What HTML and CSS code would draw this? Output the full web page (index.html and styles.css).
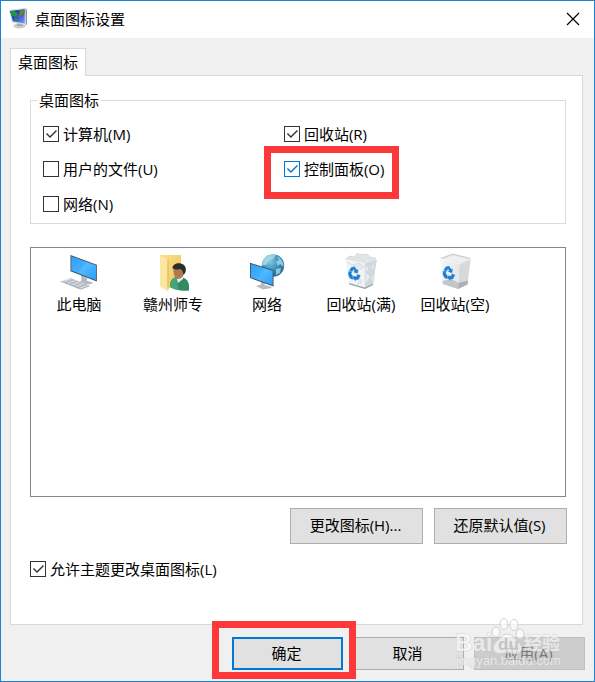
FILE: index.html
```html
<!DOCTYPE html>
<html lang="zh-CN">
<head>
<meta charset="utf-8">
<meta name="viewport" content="width=device-width, initial-scale=1">
<title>桌面图标设置</title>
<link rel="stylesheet" href="styles.css">
</head>
<body>
<svg class="defs" aria-hidden="true">
  <defs>
    <linearGradient id="screen" x1="0" y1="0" x2="1" y2="1">
      <stop offset="0" stop-color="#36a6fb"/><stop offset=".5" stop-color="#50b9ff"/><stop offset="1" stop-color="#2c9cf8"/>
    </linearGradient>
    <linearGradient id="folder" x1="0" y1="0" x2="1" y2="1">
      <stop offset="0" stop-color="#fbe08a"/><stop offset="1" stop-color="#eec45c"/>
    </linearGradient>
    <radialGradient id="globe" cx=".35" cy=".3" r=".8">
      <stop offset="0" stop-color="#8ccbe4"/><stop offset=".5" stop-color="#3b93bb"/><stop offset="1" stop-color="#1d6791"/>
    </radialGradient>
    <linearGradient id="bin" x1="0" y1="0" x2="1" y2="0">
      <stop offset="0" stop-color="#f6f7f7"/><stop offset="1" stop-color="#e4e6e8"/>
    </linearGradient>
    <linearGradient id="pc" x1="0" y1="0" x2="1" y2="1">
      <stop offset="0" stop-color="#1426a8"/><stop offset=".5" stop-color="#2848d8"/><stop offset="1" stop-color="#7aa4f4"/>
    </linearGradient>
    <g id="recycle" fill="#1b7fd6" stroke="#1b7fd6" stroke-width=".5">
      <path d="M-3.2-5.6 0-6.2 2.4-2.8 3.6-3.4 2.8.2-.8-1 .5-1.8-1-4-2.4-1.4-5-2.6z"/>
      <path d="M-5.8-1.6-2.6-.9-3.6.4-1.8 3.2-1.8 6.2-4.4 5.2-6 2z"/>
      <path d="M-1 3.4 2 3.8 3.2 1.4 5.8 2.6 3.8 6.4 1.2 6.6 1 7.8-1.4 5.4z"/>
    </g>
  </defs>
</svg>

<main class="window">
  <header class="titlebar">
    <svg class="app-icon" viewBox="0 0 20 22" aria-hidden="true">
      <ellipse cx="10.500" cy="18" rx="6" ry="2.500" fill="#c9cbcd"/>
      <path d="M8 15h5l1 3H8z" fill="#a7aaad"/>
      <path d="M0 2 16.500 0 17 17 3 14.500z" fill="#d4d8dc"/>
      <path d="M1 3 15.500 1.300 15.800 15.500 4 13.300z" fill="url(#pc)"/>
      <path d="M1.300 3.300 6 3 9 6 7.500 9 5 8.500 2.200 7zM10 2.200 15.500 1.500v4L12.500 8 10.500 6zM5.500 9.500 8 10l1 3-3.500-.5z" fill="#1c9a38"/>
      <path d="M9.500 9 14.500 2.500" stroke="#e8503a" stroke-width="1.300"/>
      <path d="M16.500 0 18 2v14.500l-1 .5z" fill="#8e949b"/>
    </svg>
    <h1 class="title">桌面图标设置</h1>
    <button class="close" type="button" aria-label="关闭">
      <svg viewBox="0 0 14 14" aria-hidden="true"><path d="M1 1 13 13M13 1 1 13"/></svg>
    </button>
  </header>

  <form class="client">
    <nav class="tabs"><button class="tab" type="button">桌面图标</button></nav>

    <section class="panel">
      <fieldset class="group">
        <legend>桌面图标</legend>
        <div class="options">
          <label class="check"><input type="checkbox" checked><span>计算机(M)</span></label>
          <label class="check"><input type="checkbox" checked><span>回收站(R)</span></label>
          <label class="check"><input type="checkbox"><span>用户的文件(U)</span></label>
          <label class="check check-active"><input type="checkbox" checked><span>控制面板(O)</span><i class="mark mark-option"></i></label>
          <label class="check"><input type="checkbox"><span>网络(N)</span></label>
        </div>
      </fieldset>

      <ul class="icons">
        <li>
          <svg viewBox="0 0 40 40" aria-hidden="true">
            <path d="M22 23 28 26 28 29 33 30 33.500 31.500 27 33 19.500 30 22.500 28.500z" fill="#b3bac0"/>
            <path d="M11.500 3 37.800 12.800V29.500L11.500 19.200z" fill="#3c4a55"/>
            <path d="M12.300 4.200 37 13.300V28.200L12.300 18.600z" fill="url(#screen)"/>
            <path d="M12.300 4.200 27 9.900 19 21 12.300 18.600z" fill="#1b8ff2" opacity=".2"/>
            <path d="M1.700 29.200 11.700 25.700 30.500 33.800 21.700 37.200z" fill="#dfe2e5"/>
            <path d="M1.700 29.200 21.700 37.200 30.500 33.800" stroke="#949ca3" stroke-width=".8" fill="none"/>
            <path d="M5 29.200 22 36M8 28.200 25 35M11 27.100 28 34M6 30.800 15 27.500M10 32.300 19 29M14 34 23 30.700M18 35.600 27 32.300" stroke="#a3abb2" stroke-width=".7" fill="none"/>
          </svg>
          <span>此电脑</span>
        </li>
        <li>
          <svg viewBox="0 0 40 40" aria-hidden="true">
            <path d="M7 3H28V34L14 36 7 34z" fill="url(#folder)"/>
            <path d="M7 3 14.500 7.300V39L7 34.700z" fill="#fbe7a4"/>
            <path d="M14.500 7.300V39L15.500 38V8z" fill="#e3b751"/>
            <path d="M17 35C17 29 19 26 24 25L31 26C35 28 36.500 31 36 38.500 29 39.500 22 38 17 35z" fill="#2f8c62"/>
            <path d="M17 35C17 29 19 26 23 25.300L26 37.800C22 37.600 19 36.500 17 35z" fill="#43a579"/>
            <path d="M23 24 30 24 30 27 25 31z" fill="#e8eee9"/>
            <path d="M20.500 15C20 21 21.500 27 25 27 29 27 32 23 31 16L25 12z" fill="#ad794f"/>
            <path d="M19.500 16C20 11 27 10 31 13 34 16 33 21 30.500 23 30 19 29 17.500 26.500 17 24 18 21 17.500 19.500 16z" fill="#292d2c"/>
          </svg>
          <span>赣州师专</span>
        </li>
        <li>
          <svg viewBox="0 0 40 40" aria-hidden="true">
            <circle cx="26" cy="13.500" r="11.200" fill="url(#globe)"/>
            <path d="M16 8C19 3 24 2 29 3L26 7 22 8 19 13 15 13zM30 4C35 7 37 11 36.500 15L33 12 31 14 29 10 32 8zM29 17 34 16 33 21 29 23z" fill="#b8e2ed" opacity=".7"/>
            <path d="M14 29 18 31 17.500 33 24 34.500 24.500 36 16 37.500 9 34 14 32.500z" fill="#b5bcc2"/>
            <path d="M3 10.800 26.500 18.200V34.400L3 26z" fill="#3c4a55"/>
            <path d="M3.800 12 25.700 18.800V33.200L3.800 25.400z" fill="url(#screen)"/>
            <path d="M3.800 12 17 16.300 11 27.900 3.800 25.400z" fill="#1b8ff2" opacity=".2"/>
          </svg>
          <span>网络</span>
        </li>
        <li>
          <svg viewBox="0 0 40 40" aria-hidden="true">
            <path d="M4.500 7 9 4 13 5 16 1.500 22 3 26 2 29 5 34 6 35.500 9 24 13z" fill="#e3e6e8" stroke="#c3c8cc" stroke-width=".6"/>
            <path d="M4.700 7 24 11.500V37L8.300 32.500z" fill="#f1f3f4"/>
            <path d="M24 11.500 35.700 8 32 33 24 37z" fill="#d3d8db"/>
            <path d="M8 31 24 35.500 32.300 31.500 32 33 24 37 8.300 32.500z" fill="#9fa5aa"/>
            <path d="M24 13 28 16 25 21 30 24 26 30 24 32zM31 11 34 15 30 19zM31 22 33 25 29 31zM6 10 11 13 18 11 23 15 20 18M18 26 21 30 16 33M9 6 14 8 18 5 22 9 27 6 31 9" fill="#e6e9eb" stroke="#cdd2d5" stroke-width=".6"/>
            <use href="#recycle" x="13.500" y="21"/>
          </svg>
          <span>回收站(满)</span>
        </li>
        <li>
          <svg viewBox="0 0 40 40" aria-hidden="true">
            <path d="M5 6.500 18 2 35.700 6.500 24.500 12z" fill="#dfe2e4" stroke="#b7bcc0" stroke-width=".7"/>
            <path d="M8 7 18 3.500V9.500zM18 3.500 33 7 24.500 10.800 18 9.500z" fill="#eff0f1"/>
            <path d="M5 6.500 24.500 12 23 37 7.700 32z" fill="url(#bin)"/>
            <path d="M24.500 12 35.700 6.500 32.500 32.500 23 37z" fill="#d6d9db"/>
            <path d="M7.400 29 17 27 23.500 31 23 37 7.700 32z" fill="#c4c7c9"/>
            <path d="M23.500 31 33 28.500 32.500 32.500 23 37z" fill="#acb0b3"/>
            <path d="M5 6.500 24.500 12 35.700 6.500" stroke="#fff" stroke-width=".8" fill="none"/>
            <use href="#recycle" x="14" y="20.500"/>
          </svg>
          <span>回收站(空)</span>
        </li>
      </ul>

      <div class="actions">
        <button class="btn btn-tall" type="button">更改图标(H)...</button>
        <button class="btn btn-tall" type="button">还原默认值(S)</button>
      </div>

      <label class="check"><input type="checkbox" checked><span>允许主题更改桌面图标(L)</span></label>
    </section>

    <footer class="footer">
      <div class="slot"><button class="btn btn-default" type="button">确定</button><i class="mark mark-ok"></i></div>
      <div class="slot"><button class="btn" type="button">取消</button></div>
      <div class="slot">
        <button class="btn" type="button" disabled>应用(A)</button>
        <svg class="watermark" viewBox="0 0 112 56" aria-hidden="true">
          <g class="wm-fill">
            <ellipse cx="41" cy="15" rx="4" ry="5"/>
            <ellipse cx="49" cy="7" rx="4" ry="5.500"/>
            <ellipse cx="59" cy="8" rx="4" ry="5.500"/>
            <ellipse cx="65" cy="17" rx="4" ry="5"/>
            <path d="M52 17C47 17 45 22 40 26 36 31 39 37 45 36.500 50 35.500 56 35.500 60 36.500 67 37 68 31 65 27 60 22 58 17 52 17z"/>
          </g>
          <text class="wm-text wm-bai" x="0" y="34">Bai</text>
          <text class="wm-du" x="43" y="33">du</text>
          <text class="wm-text wm-cn" x="69" y="33">经验</text>
          <text class="wm-text wm-url" x="1" y="48">jingyan.baidu.com</text>
        </svg>
      </div>
    </footer>
  </form>
</main>
</body>
</html>
```
FILE: styles.css
```css
* { box-sizing: border-box; }

body {
  margin: 0;
  color: #000;
  background: #fff;
  font: 15px/20px "Open Sans", "Noto Sans CJK SC", sans-serif;
}

button, input { font: inherit; color: inherit; margin: 0; }
.defs { position: absolute; width: 0; height: 0; }

.window {
  display: flex;
  flex-direction: column;
  min-height: 100vh;
  border: 1px solid #1883d7;
  background: #f0f0f0;
}

.titlebar {
  display: flex;
  align-items: center;
  height: 37px;
  padding: 0 7px 2px 8px;
  gap: 6px;
  background: #fff;
}
.app-icon { width: 20px; height: 22px; }
.title { flex: 1; margin: 0; font-size: 15px; font-weight: 400; }
.close {
  display: grid;
  place-items: center;
  width: 28px;
  height: 28px;
  padding: 0;
  border: 0;
  background: none;
}
.close svg { width: 14px; height: 14px; stroke: #000; stroke-width: 1.2; fill: none; }

.client {
  flex: 1;
  display: flex;
  flex-direction: column;
  padding: 10px 9px 11px;
}

.tabs { display: flex; position: relative; z-index: 1; margin-bottom: -1px; }
.tab {
  height: 28px;
  padding: 0 7px 2px;
  border: 1px solid #d9d9d9;
  border-bottom: 0;
  background: #fff;
}

.panel {
  flex: 1;
  display: flex;
  flex-direction: column;
  margin-right: 2px;
  padding: 14px 16px 47px 19px;
  border: 1px solid #d9d9d9;
  background: #fff;
}

.group {
  min-width: 0;
  margin: 0;
  padding: 15px 0 11px 12px;
  border: 1px solid #dcdcdc;
}
.group legend { margin-left: -6px; padding: 0 2px; line-height: 21px; }
.options { display: grid; grid-template-columns: 6fr 7fr; row-gap: 19px; justify-items: start; }

.check { display: flex; align-items: center; gap: 4px; height: 16px; position: relative; }
.check input {
  appearance: none;
  width: 16px;
  height: 16px;
  border: 1px solid #333;
  background: #fff;
}
.check input:checked::before {
  content: "";
  display: block;
  width: 14px;
  height: 14px;
  background: #333;
  clip-path: polygon(2px 7px, 3px 6px, 6px 9px, 12px 3px, 13px 4px, 6px 11px);
}
.check-active input { border-color: #0078d7; }
.check-active input:checked::before { background: #0078d7; }

.mark { position: absolute; z-index: 2; border: 7px solid #fd3838; pointer-events: none; }
.mark-option { left: -20px; top: -15px; width: 135px; height: 53px; }
.mark-ok { left: -20px; top: -16px; width: 144px; height: 58px; }

.icons {
  flex: 1;
  display: flex;
  flex-wrap: wrap;
  align-content: flex-start;
  min-height: 120px;
  margin: 23px 0 11px;
  padding: 4px 1px;
  border: 1px solid #828790;
  list-style: none;
}
.icons li { display: flex; flex-direction: column; align-items: center; gap: 2px; width: 94px; }
.icons svg { width: 40px; height: 40px; }

.actions { display: flex; justify-content: flex-end; gap: 11px; margin: 0 -1px 17px 0; }
.btn {
  width: 111px;
  height: 33px;
  padding: 0 2px 2px 0;
  border: 1px solid #adadad;
  background: #e1e1e1;
}
.btn-tall { width: 133px; height: 36px; }
.btn-default { border: 2px solid #0078d7; }
.btn:disabled { border-color: #bfbfbf; background: #ccc; color: #777; }

.footer { display: flex; justify-content: flex-end; gap: 10px; margin-top: 12px; }
.slot { position: relative; height: 33px; }

.watermark { position: absolute; left: -19px; top: -20px; width: 112px; height: 56px; overflow: visible; }
.wm-fill { fill: #fff; fill-opacity: .6; stroke: #d0d0d0; stroke-width: 1; }
.wm-text { fill: #fff; fill-opacity: .6; stroke: #c4c4c4; stroke-opacity: .5; stroke-width: 1; paint-order: stroke; font-family: "Liberation Sans", "Noto Sans CJK SC", sans-serif; }
.wm-bai { font-size: 24px; font-weight: 700; }
.wm-du { fill: #c4c4c4; font: 700 17px "Liberation Sans", sans-serif; }
.wm-cn { font-size: 18px; font-weight: 700; }
.wm-url { font-size: 13px; }
```
